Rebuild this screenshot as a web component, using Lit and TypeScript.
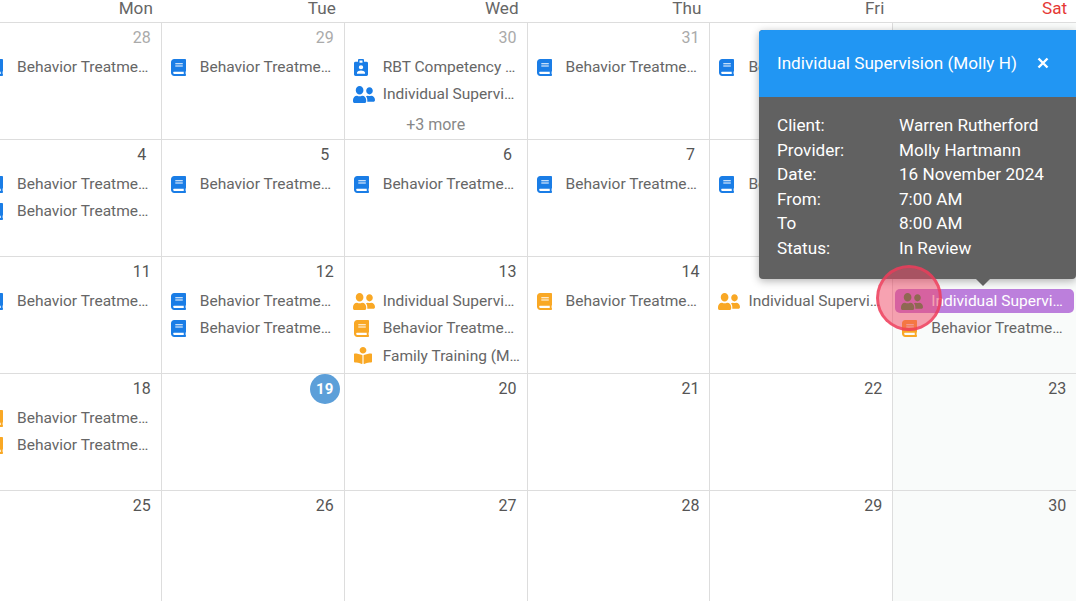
import { LitElement, css, html, svg } from 'lit';
import { customElement } from 'lit/decorators.js';

type IconName = 'book' | 'people' | 'badge' | 'family';
type CalEvent = { icon: IconName; color: 'blue' | 'orange'; label: string; selected?: boolean };
type Day = { num: number; muted?: boolean; today?: boolean; sat?: boolean; events?: CalEvent[]; more?: string };

const bt = (color: 'blue' | 'orange'): CalEvent => ({ icon: 'book', color, label: 'Behavior Treatment (Molly H)' });
const is = (color: 'blue' | 'orange'): CalEvent => ({ icon: 'people', color, label: 'Individual Supervision (Molly H)' });

const weeks: Day[][] = [
  [
    { num: 28, muted: true, events: [bt('blue')] },
    { num: 29, muted: true, events: [bt('blue')] },
    { num: 30, muted: true, events: [{ icon: 'badge', color: 'blue', label: 'RBT Competency Assessment' }, is('blue')], more: '+3 more' },
    { num: 31, muted: true, events: [bt('blue')] },
    { num: 1, events: [bt('blue')] },
    { num: 2, sat: true },
  ],
  [
    { num: 4, events: [bt('blue'), bt('blue')] },
    { num: 5, events: [bt('blue')] },
    { num: 6, events: [bt('blue')] },
    { num: 7, events: [bt('blue')] },
    { num: 8, events: [bt('blue')] },
    { num: 9, sat: true },
  ],
  [
    { num: 11, events: [bt('blue')] },
    { num: 12, events: [bt('blue'), bt('blue')] },
    { num: 13, events: [is('orange'), bt('orange'), { icon: 'family', color: 'orange', label: 'Family Training (Molly H)' }] },
    { num: 14, events: [bt('orange')] },
    { num: 15, events: [is('orange')] },
    { num: 16, sat: true, events: [{ ...is('orange'), selected: true }, bt('orange')] },
  ],
  [
    { num: 18, events: [bt('orange'), bt('orange')] },
    { num: 19, today: true },
    { num: 20 },
    { num: 21 },
    { num: 22 },
    { num: 23, sat: true },
  ],
  [{ num: 25 }, { num: 26 }, { num: 27 }, { num: 28 }, { num: 29 }, { num: 30, sat: true }],
];

const details = [
  ['Client:', 'Warren Rutherford'],
  ['Provider:', 'Molly Hartmann'],
  ['Date:', '16 November 2024'],
  ['From:', '7:00 AM'],
  ['To', '8:00 AM'],
  ['Status:', 'In Review'],
];

const icons: Record<IconName, unknown> = {
  book: svg`<path d="M448 360V24c0-13.300-10.700-24-24-24H96C43 0 0 43 0 96v320c0 53 43 96 96 96h328c13.300 0 24-10.700 24-24v-16c0-7.500-3.500-14.300-8.900-18.700-4.200-15.400-4.200-59.300 0-74.700 5.400-4.300 8.900-11.100 8.900-18.600zM128 134c0-3.300 2.700-6 6-6h212c3.300 0 6 2.700 6 6v20c0 3.300-2.700 6-6 6H134c-3.300 0-6-2.700-6-6v-20zm0 64c0-3.300 2.700-6 6-6h212c3.300 0 6 2.700 6 6v20c0 3.300-2.700 6-6 6H134c-3.300 0-6-2.700-6-6v-20zm253.400 250H96c-17.700 0-32-14.300-32-32 0-17.600 14.400-32 32-32h285.400c-1.900 17.100-1.900 46.900 0 64z"/>`,
  people: svg`<path d="M192 256c61.900 0 112-50.100 112-112S253.900 32 192 32 80 82.100 80 144s50.100 112 112 112zm76.800 32h-8.300c-20.800 10-43.900 16-68.500 16s-47.600-6-68.500-16h-8.300C51.600 288 0 339.600 0 403.200V432c0 26.500 21.500 48 48 48h288c26.500 0 48-21.500 48-48v-28.800c0-63.600-51.600-115.200-115.200-115.200zM480 256c53 0 96-43 96-96s-43-96-96-96-96 43-96 96 43 96 96 96zm48 32h-3.800c-13.900 4.800-28.600 8-44.200 8s-30.300-3.200-44.200-8H432c-20.400 0-39.200 5.900-55.700 15.400 24.400 26.300 39.700 61.200 39.700 99.800v38.400c0 2.200-.5 4.300-.6 6.400H592c26.500 0 48-21.500 48-48 0-61.900-50.100-112-112-112z"/>`,
  badge: svg`<path fill-rule="evenodd" d="M5 0h4a1 1 0 0 1 1 1v2h2.500A1.500 1.500 0 0 1 14 4.500v12a1.500 1.500 0 0 1-1.500 1.500h-11A1.500 1.500 0 0 1 0 16.500v-12A1.500 1.500 0 0 1 1.500 3H4V1a1 1 0 0 1 1-1zM5.500 1.500V4h3V1.500zM7 6.500a2.200 2.200 0 1 0 0 4.400 2.200 2.200 0 0 0 0-4.400zM3 15.500h8v-1.200c0-1.300-2.600-2.200-4-2.200s-4 .9-4 2.200z"/>`,
  family: svg`<path d="M352 96c0-53.020-42.980-96-96-96s-96 42.980-96 96 42.980 96 96 96 96-42.980 96-96zM233.590 241.100c-59.330-36.320-155.430-46.300-203.790-49.050C13.550 191.130 0 203.510 0 219.140v222.800c0 14.330 11.590 26.280 26.490 27.050 43.660 2.290 131.990 10.680 193.040 41.430 9.370 4.720 20.480-1.710 20.480-11.870V252.560c-.01-4.670-2.320-8.950-6.420-11.460zm248.610-49.050c-48.350 2.740-144.460 12.730-203.780 49.050-4.100 2.510-6.410 6.960-6.410 11.630v245.790c0 10.180 11.140 16.620 20.540 11.890 61.040-30.720 149.320-39.110 192.960-41.400 14.900-.78 26.490-12.730 26.490-27.060V219.140c-.01-15.630-13.560-28.010-29.800-27.090z"/>`,
};

const viewBoxes: Record<IconName, string> = {
  book: '0 0 448 512',
  people: '0 32 640 448',
  badge: '0 0 14 18',
  family: '0 0 512 512',
};

const iconSizes: Record<IconName, [number, number]> = {
  book: [15, 17],
  people: [22, 17],
  badge: [14, 17],
  family: [18, 17],
};

@customElement('app-root')
export class AppRoot extends LitElement {
  static styles = css`
    :host {
      display: block;
      position: relative;
      width: 1076px;
      height: 601px;
      overflow: hidden;
      background: #fff;
      font-family: Roboto, 'Liberation Sans', sans-serif;
      font-size: 15.500px;
      color: #666;
    }

    .calendar {
      width: 1097.200px;
      margin-left: -21px;
    }

    .head {
      display: grid;
      grid-template-columns: repeat(6, 1fr);
      height: 22px;
      border-bottom: 1px solid #ddd;
    }

    .head div {
      text-align: right;
      padding-right: 9px;
      font-size: 17.140px;
      line-height: 17px;
    }

    .head .sat {
      color: #e53935;
    }

    .week {
      display: grid;
      grid-template-columns: repeat(6, 1fr);
      height: 117px;
      box-sizing: border-box;
      border-bottom: 1px solid #ddd;
    }

    .day {
      min-width: 0;
      border-right: 1px solid #ddd;
      box-sizing: border-box;
      overflow: hidden;
    }

    .day.sat {
      border-right: 0;
      background: #f9fbfa;
    }

    .num {
      display: flex;
      justify-content: flex-end;
      height: 30px;
      margin-bottom: 2px;
      padding-right: 4px;
      font-size: 16px;
      line-height: 30px;
      color: #555;
    }

    .num span {
      display: block;
      width: 30px;
      height: 30px;
      border-radius: 50%;
      text-align: center;
    }

    .num.muted {
      color: #aaa;
    }

    .num.today span {
      background: #5c9fd9;
      color: #fff;
      font-size: 15px;
      font-weight: 700;
    }

    .event {
      display: flex;
      align-items: center;
      height: 24px;
      margin: 0 2px 3.400px;
      padding: 0 4px 0 7px;
      border-radius: 5px;
    }

    .event.selected {
      background: #bc7fdc;
      color: #fff;
    }

    .icon {
      flex: 0 0 29px;
      display: flex;
      align-items: center;
    }

    .people svg {
      margin-left: -1px;
    }

    .blue svg {
      fill: #1a7de6;
    }

    .orange svg {
      fill: #f9a825;
    }

    .event.selected svg {
      fill: #2e8a40;
    }

    .label {
      min-width: 0;
      white-space: nowrap;
      overflow: hidden;
      text-overflow: ellipsis;
    }

    .more {
      margin-top: 9px;
      text-align: center;
      font-size: 16px;
      color: #888;
    }

    .popup {
      position: absolute;
      left: 759px;
      top: 30px;
      width: 317px;
      border-radius: 4px 0 4px 4px;
      background: #616161;
      color: #fff;
      box-shadow: 0 2px 8px rgba(0, 0, 0, 0.3);
    }

    .popup::after {
      content: '';
      position: absolute;
      left: 217px;
      bottom: -7px;
      border: 7px solid transparent;
      border-bottom: 0;
      border-top-color: #616161;
    }

    .popup-head {
      display: flex;
      align-items: center;
      height: 65px;
      padding: 0 18px 2px;
      border-radius: 4px 0 0 0;
      background: #2196f3;
      font-size: 17.140px;
    }

    .close {
      margin-left: 20px;
      width: 12px;
      height: 12px;
    }

    .rows {
      display: grid;
      grid-template-columns: 122px 1fr;
      padding: 16px 18px 19px;
      line-height: 24.500px;
      font-size: 17.140px;
    }

    .ring {
      position: absolute;
      left: 876px;
      top: 265px;
      width: 66px;
      height: 66px;
      box-sizing: border-box;
      border: 3px solid rgba(238, 60, 90, 0.75);
      border-radius: 50%;
      background: rgba(240, 70, 100, 0.5);
    }
  `;

  renderEvent(e: CalEvent) {
    const [w, h] = iconSizes[e.icon];
    return html`
      <div class="event ${e.color} ${e.icon} ${e.selected ? 'selected' : ''}">
        <span class="icon">
          <svg width=${w} height=${h} viewBox=${viewBoxes[e.icon]} preserveAspectRatio="none">${icons[e.icon]}</svg>
        </span>
        <span class="label">${e.label}</span>
      </div>
    `;
  }

  renderDay(d: Day) {
    return html`
      <div class="day ${d.sat ? 'sat' : ''}">
        <div class="num ${d.muted ? 'muted' : ''} ${d.today ? 'today' : ''}"><span>${d.num}</span></div>
        ${(d.events ?? []).map((e) => this.renderEvent(e))}
        ${d.more ? html`<div class="more">${d.more}</div>` : ''}
      </div>
    `;
  }

  render() {
    return html`
      <div class="calendar">
        <div class="head">
          <div>Mon</div>
          <div>Tue</div>
          <div>Wed</div>
          <div>Thu</div>
          <div>Fri</div>
          <div class="sat">Sat</div>
        </div>
        ${weeks.map((w) => html`<div class="week">${w.map((d) => this.renderDay(d))}</div>`)}
      </div>

      <div class="popup">
        <div class="popup-head">
          <span>Individual Supervision (Molly H)</span>
          <svg class="close" viewBox="0 0 12 12" fill="none" stroke="#fff" stroke-width="2.400">
            <path d="M1.500 1.500l9 9M10.500 1.500l-9 9" />
          </svg>
        </div>
        <div class="rows">
          ${details.map(([k, v]) => html`<span>${k}</span><span>${v}</span>`)}
        </div>
      </div>
      <div class="ring"></div>
    `;
  }
}
